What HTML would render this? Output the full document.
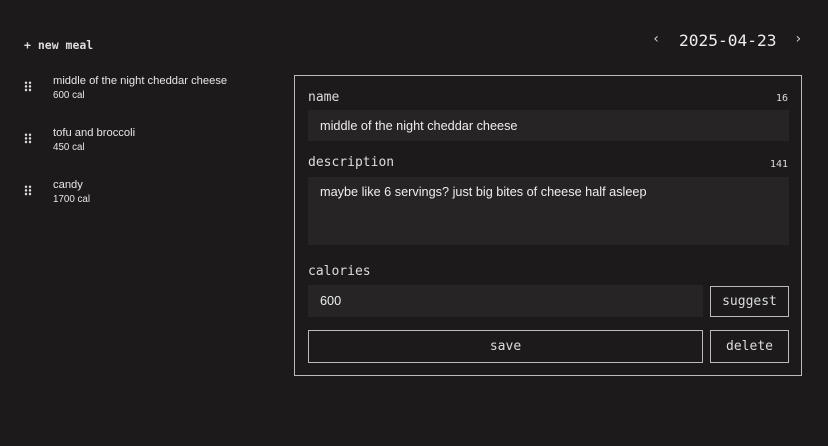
<!DOCTYPE html>
<html><head><style>
*{margin:0;padding:0;box-sizing:border-box}
body{width:828px;height:446px;background:#1c1a1b;color:#e8e6e6;font-family:"Liberation Sans",sans-serif;position:relative;overflow:hidden}
.a{position:absolute}
.mono{font-family:"DejaVu Sans Mono","Liberation Mono",monospace}
.grip{position:absolute;width:8px;height:11px;background-image:radial-gradient(circle,#ddd 1.1px,transparent 1.4px);background-size:4px 3.6px}
.inp{position:absolute;background:#272425;font-size:12.7px;color:#eee;padding-left:12px}
.btn{position:absolute;border:1px solid #bbb;font-size:13px;text-align:center;color:#ddd}
.lbl{position:absolute;font-size:13px;color:#ddd}
.cnt{position:absolute;font-size:10px;color:#ddd;text-align:right}
.t{position:absolute;left:53px;font-size:11.2px}
.c{position:absolute;left:53px;font-size:9.8px}
</style></head><body>
<div class="a mono" style="left:24px;top:38px;font-size:11.5px;font-weight:bold;color:#ddd">+ new meal</div>

<div class="grip" style="left:24px;top:81px"></div>
<div class="t" style="top:75px">middle of the night cheddar cheese</div>
<div class="c" style="top:90px">600 cal</div>

<div class="grip" style="left:24px;top:133px"></div>
<div class="t" style="top:127px">tofu and broccoli</div>
<div class="c" style="top:142px">450 cal</div>

<div class="grip" style="left:24px;top:185px"></div>
<div class="t" style="top:179px">candy</div>
<div class="c" style="top:194px">1700 cal</div>

<div class="a mono" style="left:652px;top:31px;font-size:14px;color:#ccc">‹</div>
<div class="a mono" style="left:679px;top:31px;font-size:16.2px;color:#eee">2025-04-23</div>
<div class="a mono" style="left:794px;top:31px;font-size:14px;color:#ccc">›</div>

<div class="a" style="left:294px;top:75px;width:508px;height:301px;border:1px solid #bbb"></div>
<div class="lbl mono" style="left:308px;top:90px">name</div>
<div class="cnt mono" style="left:740px;top:93px;width:48px">16</div>
<div class="inp" style="left:308px;top:110px;width:481px;height:31px;line-height:33px">middle of the night cheddar cheese</div>
<div class="lbl mono" style="left:308px;top:155px">description</div>
<div class="cnt mono" style="left:740px;top:159px;width:48px">141</div>
<div class="inp" style="left:308px;top:177px;width:481px;height:68px;padding-top:8px">maybe like 6 servings? just big bites of cheese half asleep</div>
<div class="lbl mono" style="left:308px;top:264px">calories</div>
<div class="inp" style="left:308px;top:285px;width:395px;height:32px;line-height:33px">600</div>
<div class="btn mono" style="left:710px;top:286px;width:79px;height:31px;line-height:29px">suggest</div>
<div class="btn mono" style="left:308px;top:330px;width:395px;height:33px;line-height:31px">save</div>
<div class="btn mono" style="left:710px;top:330px;width:79px;height:33px;line-height:31px">delete</div>
</body></html>
